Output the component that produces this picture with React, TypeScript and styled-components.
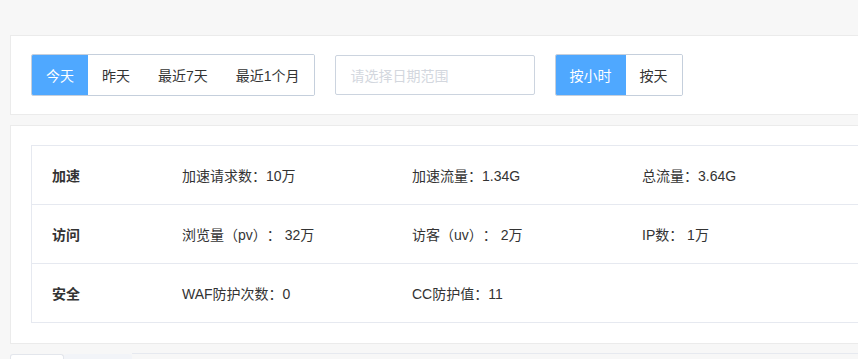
import React from 'react';
import styled, { createGlobalStyle } from 'styled-components';

const GlobalStyle = createGlobalStyle`
  html, body {
    margin: 0;
    padding: 0;
    background: #f7f7f7;
    overflow: hidden;
  }
  body {
    font-family: "Liberation Sans", "Noto Sans CJK SC", sans-serif;
    font-size: 14px;
    color: #333;
    text-spacing-trim: space-all;
  }
`

const Page = styled.div`
  width: 1100px;
  padding: 35px 0 0 10px;
  display: flex;
  flex-direction: column;
  gap: 10px;
`

const Card = styled.div<{ $pad: string }>`
  background: #fff;
  border: 1px solid #ebebeb;
  padding: ${p => p.$pad};
`

const Toolbar = styled.div`
  display: flex;
  align-items: center;
  gap: 20px;
`

const Group = styled.div`
  display: flex;
  height: 42px;
  border: 1px solid #c5cfdc;
  border-radius: 2px;
  box-sizing: border-box;
  overflow: hidden;
`

const GroupButton = styled.div<{ $active?: boolean }>`
  display: flex;
  align-items: center;
  padding: 0 14px;
  background: ${p => (p.$active ? '#4fa8ff' : '#fff')};
  color: ${p => (p.$active ? '#fff' : '#333')};
  cursor: pointer;
  white-space: nowrap;
`

const DateInput = styled.div`
  width: 200px;
  height: 40px;
  box-sizing: border-box;
  border: 1px solid #ccd4df;
  border-radius: 2px;
  display: flex;
  align-items: center;
  padding-left: 15px;
  color: #d3d7de;
`

const Table = styled.div`
  border: 1px solid #e6e9f0;
`

const Row = styled.div`
  display: grid;
  grid-template-columns: 150px 230px 230px 230px 1fr;
  height: 58px;
  align-items: center;
  & + & {
    border-top: 1px solid #e6e9f0;
  }
`

const Label = styled.div`
  padding-left: 20px;
  font-weight: bold;
`

const Cell = styled.div`
  white-space: pre;
`

const Tabs = styled.div`
  display: flex;
  align-items: flex-end;
  height: 20px;
`

const Tab = styled.div<{ $active?: boolean }>`
  width: ${p => (p.$active ? '54px' : '68px')};
  height: 100%;
  box-sizing: border-box;
  background: ${p => (p.$active ? '#fff' : '#f2f4f8')};
  border: 1px solid ${p => (p.$active ? '#e3e6ec' : 'transparent')};
  border-bottom: none;
  border-radius: 3px 3px 0 0;
`

const TabLine = styled.div`
  flex: 1;
  height: 100%;
  border-top: 1px solid #e6e9ef;
`

const rows = [
  { label: '加速', items: ['加速请求数：10万', '加速流量：1.34G', '总流量：3.64G'] },
  { label: '访问', items: ['浏览量（pv）： 32万', '访客（uv）： 2万', 'IP数： 1万'] },
  { label: '安全', items: ['WAF防护次数：0', 'CC防护值：11', ''] },
];

export default function App() {
  return (
    <>
      <GlobalStyle />
      <Page>
        <Card $pad="18px 20px 18px 20px">
          <Toolbar>
            <Group>
              <GroupButton $active>今天</GroupButton>
              <GroupButton>昨天</GroupButton>
              <GroupButton>最近7天</GroupButton>
              <GroupButton>最近1个月</GroupButton>
            </Group>
            <DateInput>请选择日期范围</DateInput>
            <Group>
              <GroupButton $active>按小时</GroupButton>
              <GroupButton>按天</GroupButton>
            </Group>
          </Toolbar>
        </Card>
        <Card $pad="19px 20px 20px 20px">
          <Table>
            {rows.map(r => (
              <Row key={r.label}>
                <Label>{r.label}</Label>
                {r.items.map((t, i) => (
                  <Cell key={i}>{t}</Cell>
                ))}
              </Row>
            ))}
          </Table>
        </Card>
        <Tabs>
          <Tab $active />
          <Tab />
          <TabLine />
        </Tabs>
      </Page>
    </>
  );
}
